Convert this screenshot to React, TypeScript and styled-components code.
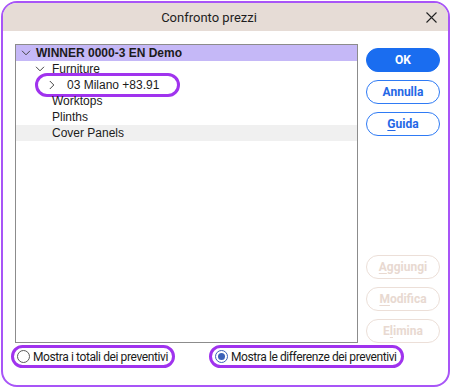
import React, { useState } from "react";
import styled, { createGlobalStyle, css } from "styled-components";

const GlobalStyle = createGlobalStyle`
  html, body {
    margin: 0;
    padding: 0;
    background: #ffffff;
  }
  * {
    box-sizing: border-box;
  }
`;

const Window = styled.div`
  margin: 1px;
  width: 449px;
  height: 386px;
  border: 2px solid #a855f7;
  border-radius: 16px;
  overflow: hidden;
  background: #ffffff;
  display: flex;
  flex-direction: column;
`;

const TitleBar = styled.div`
  height: 28px;
  background: #e6dcd6;
  display: flex;
  align-items: center;
`;

const Title = styled.div`
  flex: 1;
  text-align: center;
  font-family: Roboto, "Liberation Sans", sans-serif;
  font-size: 13px;
  color: #1e1e1e;
`;

const CloseButton = styled.button`
  width: 33px;
  height: 28px;
  border: none;
  background: transparent;
  padding: 0;
  display: flex;
  align-items: center;
  justify-content: center;
  cursor: pointer;
`;

const Body = styled.div`
  flex: 1;
  display: flex;
  flex-direction: column;
  padding: 13px 0 0 0;
`;

const Main = styled.div`
  display: flex;
  gap: 8px;
  padding-left: 12px;
`;

const TreeBox = styled.div`
  width: 343px;
  height: 299px;
  border: 1px solid #8c8c8c;
  display: flex;
  flex-direction: column;
`;

const Row = styled.div<{ $selected?: boolean; $hover?: boolean }>`
  position: relative;
  height: 16px;
  display: flex;
  align-items: center;
  font-family: "Liberation Sans", Arial, sans-serif;
  font-size: 12px;
  color: #1b1b1b;
  white-space: nowrap;
  ${(p) =>
    p.$selected &&
    css`
      background: #c5b8f7;
      font-weight: bold;
    `}
  ${(p) =>
    p.$hover &&
    css`
      background: #f0f0f0;
    `}
`;

const Toggle = styled.span`
  width: 16px;
  display: inline-flex;
  justify-content: center;
  align-items: center;
`;

const Indent = styled.span<{ $w: number }>`
  display: inline-block;
  width: ${(p) => p.$w}px;
  flex: none;
`;

const Marked = styled.span`
  position: relative;
  display: inline-flex;
  align-items: center;
  &::after {
    content: "";
    position: absolute;
    left: -9px;
    right: -21px;
    top: -5px;
    bottom: -5px;
    border: 3.5px solid #a033ee;
    border-radius: 12px;
    pointer-events: none;
  }
`;

const Side = styled.div`
  width: 74px;
  height: 299px;
  padding-top: 4px;
  display: flex;
  flex-direction: column;
  justify-content: space-between;
`;

const ButtonGroup = styled.div`
  display: flex;
  flex-direction: column;
  gap: 8px;
`;

const Button = styled.button<{ $primary?: boolean }>`
  height: 24px;
  width: 74px;
  border-radius: 12px;
  font-family: Roboto, "Liberation Sans", sans-serif;
  font-weight: bold;
  font-size: 12px;
  padding: 0;
  cursor: pointer;
  border: 1px solid #2f7bf5;
  background: #ffffff;
  color: #2467e6;
  ${(p) =>
    p.$primary &&
    css`
      background: #1a6df0;
      border-color: #1a6df0;
      color: #ffffff;
    `}
  &:disabled {
    border-color: #ecdfd8;
    color: #e8d9d1;
    cursor: default;
  }
  u {
    text-decoration-thickness: 1px;
    text-underline-offset: 2px;
  }
`;

const RadioRow = styled.div`
  display: flex;
  gap: 34px;
  padding: 2px 0 0 8px;
`;

const RadioLabel = styled.label`
  display: flex;
  align-items: center;
  gap: 3px;
  height: 23px;
  padding: 0 4px 0 3px;
  border: 3.5px solid #a033ee;
  border-radius: 12px;
  font-family: Roboto, "Liberation Sans", sans-serif;
  font-size: 12px;
  letter-spacing: -0.4px;
  color: #1b1b1b;
  cursor: pointer;
`;

const RadioCircle = styled.span<{ $checked: boolean }>`
  width: 13px;
  height: 13px;
  border-radius: 50%;
  border: 1px solid ${(p) => (p.$checked ? "#3b62b8" : "#5a5a5a")};
  display: inline-flex;
  align-items: center;
  justify-content: center;
  background: #ffffff;
  &::after {
    content: "";
    width: 7px;
    height: 7px;
    border-radius: 50%;
    background: ${(p) => (p.$checked ? "#3b62b8" : "transparent")};
  }
`;

const ChevronDown = () => (
  <svg width="10" height="6" viewBox="0 0 10 6">
    <path d="M1 0.8 L5 4.8 L9 0.8" fill="none" stroke="#444" strokeWidth="1" />
  </svg>
);

const ChevronRight = () => (
  <svg width="6" height="10" viewBox="0 0 6 10">
    <path d="M0.8 1 L4.8 5 L0.8 9" fill="none" stroke="#444" strokeWidth="1" />
  </svg>
);

export default function App() {
  const [mode, setMode] = useState("diff");

  return (
    <>
      <GlobalStyle />
      <Window>
        <TitleBar>
          <Title>Confronto prezzi</Title>
          <CloseButton aria-label="Chiudi">
            <svg width="11" height="11" viewBox="0 0 11 11">
              <path d="M0.5 0.5 L10.5 10.5 M10.5 0.5 L0.5 10.5" stroke="#222" strokeWidth="1.1" />
            </svg>
          </CloseButton>
        </TitleBar>
        <Body>
          <Main>
            <TreeBox>
              <Row $selected>
                <Indent $w={2} />
                <Toggle><ChevronDown /></Toggle>
                <Indent $w={2} />
                WINNER 0000-3 EN Demo
              </Row>
              <Row>
                <Indent $w={16} />
                <Toggle><ChevronDown /></Toggle>
                <Indent $w={4} />
                Furniture
              </Row>
              <Row>
                <Indent $w={28} />
                <Marked>
                  <Toggle><ChevronRight /></Toggle>
                  <Indent $w={7} />
                  03 Milano +83.91
                </Marked>
              </Row>
              <Row>
                <Indent $w={36} />
                Worktops
              </Row>
              <Row>
                <Indent $w={36} />
                Plinths
              </Row>
              <Row $hover>
                <Indent $w={36} />
                Cover Panels
              </Row>
            </TreeBox>
            <Side>
              <ButtonGroup>
                <Button $primary>OK</Button>
                <Button>Annulla</Button>
                <Button><u>G</u>uida</Button>
              </ButtonGroup>
              <ButtonGroup>
                <Button disabled><u>A</u>ggiungi</Button>
                <Button disabled><u>M</u>odifica</Button>
                <Button disabled>E<u>l</u>imina</Button>
              </ButtonGroup>
            </Side>
          </Main>
          <RadioRow>
            <RadioLabel onClick={() => setMode("tot")}>
              <RadioCircle $checked={mode === "tot"} />
              Mostra i totali dei preventivi
            </RadioLabel>
            <RadioLabel onClick={() => setMode("diff")}>
              <RadioCircle $checked={mode === "diff"} />
              Mostra le differenze dei preventivi
            </RadioLabel>
          </RadioRow>
        </Body>
      </Window>
    </>
  );
}
